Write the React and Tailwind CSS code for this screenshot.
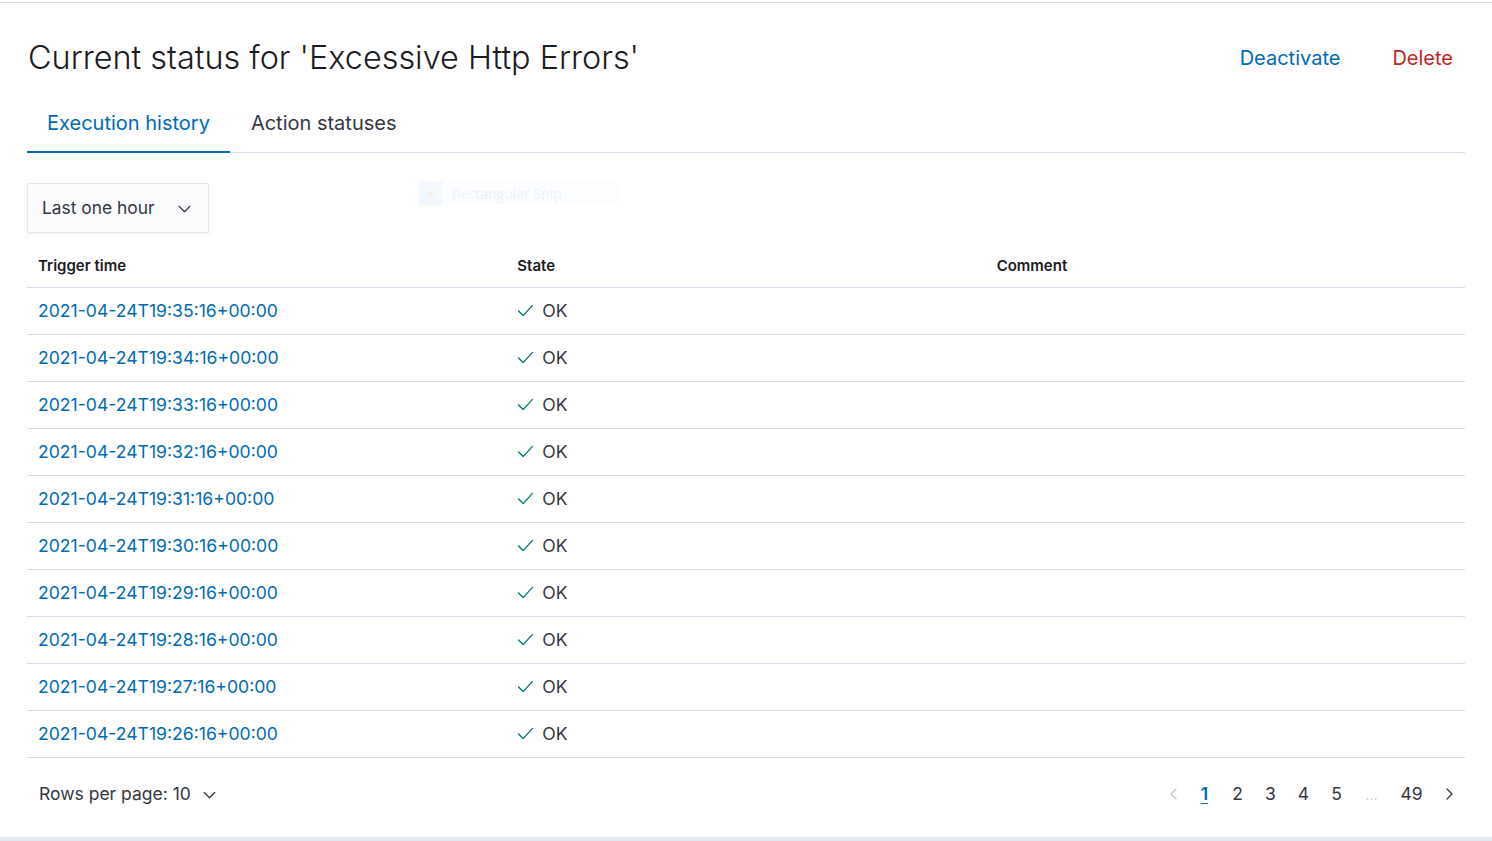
import React from "react";

const rows = [
  "2021-04-24T19:35:16+00:00",
  "2021-04-24T19:34:16+00:00",
  "2021-04-24T19:33:16+00:00",
  "2021-04-24T19:32:16+00:00",
  "2021-04-24T19:31:16+00:00",
  "2021-04-24T19:30:16+00:00",
  "2021-04-24T19:29:16+00:00",
  "2021-04-24T19:28:16+00:00",
  "2021-04-24T19:27:16+00:00",
  "2021-04-24T19:26:16+00:00",
];

const Chevron = ({ dir = "down", className = "" }) => {
  const d =
    dir === "down"
      ? "M3 6l5 5 5-5"
      : dir === "left"
      ? "M10 3L5 8l5 5"
      : "M6 3l5 5-5 5";
  return (
    <svg viewBox="0 0 16 16" className={className} fill="none" stroke="currentColor" strokeWidth="1.3" strokeLinecap="round" strokeLinejoin="round">
      <path d={d} />
    </svg>
  );
};

const Check = () => (
  <svg viewBox="0 0 18 14" className="w-[17px] h-[13px] text-[#017d73]" fill="none" stroke="currentColor" strokeWidth="1.5" strokeLinecap="round" strokeLinejoin="round">
    <path d="M1.5 7.5l5 5L16.5 1.5" />
  </svg>
);

export default function App() {
  return (
    <div className="relative w-full h-[841px] bg-white flex flex-col text-[#343741] border-b-4 border-[#e3e7ee]" style={{ fontFamily: "Inter, 'Noto Sans', sans-serif" }}>
      <div className="h-[2px]" />
      <div className="border-t border-[#d3dae6]" />
      <div className="flex-1 px-[27px] pt-[35px]">
        <div className="flex items-center justify-between h-[40px]">
          <h1 className="text-[32.4px] leading-[40px] font-light text-[#1a1c21] pl-px">
            Current status for 'Excessive Http Errors'
          </h1>
          <div className="flex items-center gap-[40px] text-[20px] pr-[12px]">
            <span className="text-[#006bb4] px-[12px]">Deactivate</span>
            <span className="text-[#bd271e]">Delete</span>
          </div>
        </div>

        <div className="mt-[31px] flex border-b border-[#d3dae6]">
          <div className="-mb-px px-[20px] pb-[14px] border-b-2 border-[#006bb4] text-[20px] leading-[28px] text-[#006bb4]">
            Execution history
          </div>
          <div className="-mb-px pl-[21px] pr-[20px] pb-[14px] border-b-2 border-transparent text-[20px] leading-[28px] text-[#343741]">
            Action statuses
          </div>
        </div>

        <div className="mt-[30px] w-[182px] h-[50px] border border-[#e4e8ef] bg-[#fbfcfd] shadow-[0_1px_2px_rgba(0,0,0,0.05)] flex items-center justify-between pl-[14px] pr-[15px] text-[17.4px] text-[#343741]">
          <span>Last one hour</span>
          <Chevron className="w-[17px] h-[17px]" />
        </div>

        <div className="mt-[10px]">
          <div className="grid grid-cols-3 h-[45px] pt-[2px] items-center border-b border-[#d3dae6] text-[15px] font-semibold text-[#1a1c21]">
            <div className="pl-[11px]">Trigger time</div>
            <div className="pl-[11px]">State</div>
            <div className="pl-[11px]">Comment</div>
          </div>
          {rows.map((r) => (
            <div key={r} className="grid grid-cols-3 h-[47px] items-center border-b border-[#d3dae6] text-[17.6px]">
              <div className="pl-[11px] text-[#006bb4]">{r}</div>
              <div className="pl-[11px] flex items-center gap-[8px] text-[#343741]">
                <Check />
                <span>OK</span>
              </div>
              <div />
            </div>
          ))}
        </div>

        <div className="h-[72px] flex items-center justify-between text-[17.5px]">
          <div className="flex items-center pl-[12px] text-[#343741]">
            <span>Rows per page: 10</span>
            <Chevron className="w-[17px] h-[17px] ml-[10px]" />
          </div>
          <div className="flex items-center pr-[8px]">
            <Chevron dir="left" className="w-[16px] h-[16px] text-[#c2c7d0] mr-[6px]" />
            <span className="w-[33px] text-center text-[#006bb4] font-semibold underline underline-offset-[3px]">1</span>
            <span className="w-[33px] text-center">2</span>
            <span className="w-[33px] text-center">3</span>
            <span className="w-[33px] text-center">4</span>
            <span className="w-[33px] text-center">5</span>
            <span className="w-[37px] text-center text-[#c2c7d0] text-[14px]">...</span>
            <span className="w-[43px] text-center">49</span>
            <Chevron dir="right" className="w-[16px] h-[16px] ml-[8px] text-[#343741]" />
          </div>
        </div>
      </div>

      <div className="absolute left-[419px] top-[181px] w-[202px] h-[24px] bg-[#fbfdff] flex items-center">
        <div className="w-[23px] h-[24px] bg-[#f3f8fe] flex items-center justify-center">
          <div className="w-[6px] h-[6px] rounded-full bg-[#fbeee8]" />
        </div>
        <span className="ml-[10px] text-[14px] text-[#eef1f5]" style={{ fontFamily: "'Open Sans', sans-serif" }}>Rectangular Snip</span>
      </div>
    </div>
  );
}
